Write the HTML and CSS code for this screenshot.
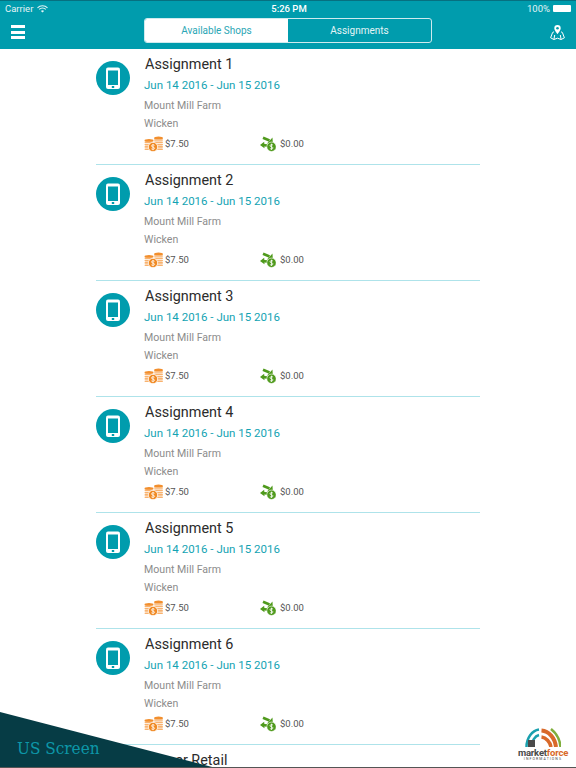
FILE: index.html
```html
<!DOCTYPE html>
<html lang="en">
<head>
<meta charset="utf-8">
<title>Assignments</title>
<link rel="stylesheet" href="styles.css">
</head>
<body>
<svg class="defs" width="0" height="0" aria-hidden="true">
  <symbol id="phone" viewBox="0 0 34 34">
    <circle cx="17" cy="17" r="17" fill="#009cad"/>
    <rect x="10" y="6.5" width="14" height="21.5" rx="2" fill="#fff"/>
    <rect x="12" y="9.5" width="10" height="14.5" fill="#009cad"/>
    <rect x="15.8" y="25" width="2.4" height="2" fill="#009cad"/>
  </symbol>
  <symbol id="coins" viewBox="0 0 20 16">
    <g fill="#f8b26f">
      <ellipse cx="5" cy="4.500" rx="4.500" ry="1.500" fill="#f28f2e"/>
      <rect x="0.500" y="5.500" width="9" height="1.600" rx=".8"/>
      <rect x="0.500" y="7.800" width="9" height="1.600" rx=".8"/>
      <rect x="0.500" y="10.100" width="9" height="1.600" rx=".8"/>
      <rect x="0.500" y="12.400" width="9" height="1.600" rx=".8"/>
      <ellipse cx="14.500" cy="2" rx="4.500" ry="1.600" fill="#f28f2e"/>
      <rect x="10" y="3.200" width="9" height="1.600" rx=".8"/>
      <rect x="10" y="5.500" width="9" height="1.600" rx=".8"/>
      <rect x="10" y="7.800" width="9" height="1.600" rx=".8"/>
      <rect x="10" y="10.100" width="9" height="1.600" rx=".8"/>
      <rect x="10" y="12.400" width="9" height="1.600" rx=".8"/>
    </g>
    <circle cx="9" cy="11" r="4.700" fill="#f08a24" stroke="#fff" stroke-width="0.800"/>
    <path d="M10.500 9.300c-.9-.8-3-.6-3 .7 0 1.500 3 .7 3 2.200 0 1.300-2.200 1.400-3.100.6M9 8v6.200" fill="none" stroke="#fff" stroke-width="0.800"/>
  </symbol>
  <symbol id="swap" viewBox="0 0 16 16">
    <path d="M3 1.800 9.500 4.500" fill="none" stroke="#4f9a1c" stroke-width="2.600"/>
    <path d="M12.500 1.500 12.800 7.500 7 7.400z" fill="#4f9a1c"/>
    <path d="M8.500 9.800 3 9" fill="none" stroke="#4f9a1c" stroke-width="2.400"/>
    <path d="M0 9 4.200 5.800 4.500 12.300z" fill="#4f9a1c"/>
    <circle cx="11.500" cy="10.800" r="4.700" fill="#4f9a1c" stroke="#fff" stroke-width=".6"/>
    <path d="M13 9.100c-.9-.8-3-.6-3 .7 0 1.500 3 .7 3 2.100 0 1.300-2.200 1.400-3.100.6M11.500 7.700v6.200" fill="none" stroke="#fff" stroke-width="0.800"/>
  </symbol>
</svg>

<header class="top">
  <div class="status">
    <div class="status-left">
      <span>Carrier</span>
      <svg class="wifi" width="11" height="8" viewBox="0 0 11 8"><path d="M.5 2.800a7 7 0 0 1 10 0M2.200 4.400a4.600 4.600 0 0 1 6.600 0" fill="none" stroke="#e4f4f6" stroke-width="1.100"/><path d="M3.900 5.900a2.300 2.300 0 0 1 3.200 0L5.500 7.600z" fill="#e4f4f6"/></svg>
    </div>
    <span class="status-time">5:26 PM</span>
    <div class="status-right">
      <span>100%</span>
      <span class="battery"></span>
    </div>
  </div>
  <nav class="nav">
    <div class="burger"><span></span><span></span><span></span></div>
    <div class="tabs">
      <span class="tab tab-on">Available Shops</span>
      <span class="tab">Assignments</span>
    </div>
    <svg class="pin" width="15" height="15" viewBox="0 0 15 15">
      <path d="M7.500 0a3.200 3.200 0 0 0-3.200 3.200c0 2.200 3.200 5.800 3.200 5.800s3.200-3.600 3.200-5.800A3.200 3.200 0 0 0 7.500 0z" fill="#fff"/>
      <circle cx="7.500" cy="3.200" r="1.300" fill="#009cad"/>
      <path d="M4 6.800 2.600 7.500.6 12.800l3.300 1.700 3.600-1.300 3.600 1.300 3.300-1.700-2-5.300L11 6.800M3.900 14.500l.8-4.500M11.100 14.500l-.8-4.500" fill="none" stroke="#fff" stroke-width="1"/>
    </svg>
  </nav>
</header>

<main class="list">
  <article class="row">
    <svg class="avatar"><use href="#phone"/></svg>
    <div class="body">
      <h2 class="title">Assignment 1</h2>
      <p class="date">Jun 14 2016 - Jun 15 2016</p>
      <p class="place">Mount Mill Farm</p>
      <p class="place">Wicken</p>
      <div class="money">
        <span class="amount"><svg class="coins"><use href="#coins"/></svg>$7.50</span>
        <span class="amount"><svg class="swap"><use href="#swap"/></svg>$0.00</span>
      </div>
    </div>
  </article>
  <article class="row">
    <svg class="avatar"><use href="#phone"/></svg>
    <div class="body">
      <h2 class="title">Assignment 2</h2>
      <p class="date">Jun 14 2016 - Jun 15 2016</p>
      <p class="place">Mount Mill Farm</p>
      <p class="place">Wicken</p>
      <div class="money">
        <span class="amount"><svg class="coins"><use href="#coins"/></svg>$7.50</span>
        <span class="amount"><svg class="swap"><use href="#swap"/></svg>$0.00</span>
      </div>
    </div>
  </article>
  <article class="row">
    <svg class="avatar"><use href="#phone"/></svg>
    <div class="body">
      <h2 class="title">Assignment 3</h2>
      <p class="date">Jun 14 2016 - Jun 15 2016</p>
      <p class="place">Mount Mill Farm</p>
      <p class="place">Wicken</p>
      <div class="money">
        <span class="amount"><svg class="coins"><use href="#coins"/></svg>$7.50</span>
        <span class="amount"><svg class="swap"><use href="#swap"/></svg>$0.00</span>
      </div>
    </div>
  </article>
  <article class="row">
    <svg class="avatar"><use href="#phone"/></svg>
    <div class="body">
      <h2 class="title">Assignment 4</h2>
      <p class="date">Jun 14 2016 - Jun 15 2016</p>
      <p class="place">Mount Mill Farm</p>
      <p class="place">Wicken</p>
      <div class="money">
        <span class="amount"><svg class="coins"><use href="#coins"/></svg>$7.50</span>
        <span class="amount"><svg class="swap"><use href="#swap"/></svg>$0.00</span>
      </div>
    </div>
  </article>
  <article class="row">
    <svg class="avatar"><use href="#phone"/></svg>
    <div class="body">
      <h2 class="title">Assignment 5</h2>
      <p class="date">Jun 14 2016 - Jun 15 2016</p>
      <p class="place">Mount Mill Farm</p>
      <p class="place">Wicken</p>
      <div class="money">
        <span class="amount"><svg class="coins"><use href="#coins"/></svg>$7.50</span>
        <span class="amount"><svg class="swap"><use href="#swap"/></svg>$0.00</span>
      </div>
    </div>
  </article>
  <article class="row">
    <svg class="avatar"><use href="#phone"/></svg>
    <div class="body">
      <h2 class="title">Assignment 6</h2>
      <p class="date">Jun 14 2016 - Jun 15 2016</p>
      <p class="place">Mount Mill Farm</p>
      <p class="place">Wicken</p>
      <div class="money">
        <span class="amount"><svg class="coins"><use href="#coins"/></svg>$7.50</span>
        <span class="amount"><svg class="swap"><use href="#swap"/></svg>$0.00</span>
      </div>
    </div>
  </article>
  <article class="row">
    <svg class="avatar"><use href="#phone"/></svg>
    <div class="body">
      <h2 class="title">Grocer Retail</h2>
    </div>
  </article>
</main>

<div class="ribbon"><span class="ribbon-text">US Screen</span></div>

<div class="edge"></div>

<div class="brand">
  <svg width="36" height="19" viewBox="0 0 36 19">
    <g fill="none">
      <path d="M1.500 19C1.500 10 7 2.500 14 1.500" stroke="#1aa0ae" stroke-width="2.500"/>
      <path d="M6.500 19C6.500 13 10 8 14 7" stroke="#1aa0ae" stroke-width="2.500"/>
      <path d="M16.500 2.500C24 3 30 10 31 19" stroke="#d9692a" stroke-width="4"/>
      <path d="M16.500 9C21 9.500 25 14 26 19" stroke="#d9692a" stroke-width="3.500"/>
      <path d="M26 1C31 5 35 12 35.500 19" stroke="#7fae3c" stroke-width="2.500"/>
    </g>
    <rect x="3" y="12" width="7" height="7" fill="#4a4a4a"/>
  </svg>
  <span class="brand-name">market<b>force</b></span>
  <span class="brand-sub">INFORMATIONS</span>
</div>
</body>
</html>
```

FILE: styles.css
```css
* { box-sizing: border-box; }
html, body { margin: 0; height: 768px; overflow: hidden; background: #fff; }
body { font-family: Roboto, "Liberation Sans", sans-serif; position: relative; }
.defs { position: absolute; }

.top { height: 49px; background: #009cad; border-top: 1px solid #067080; color: #e4f4f6; }
.status { height: 15px; display: flex; justify-content: space-between; align-items: center; padding: 0 4px 0 5px; font-size: 9.5px; position: relative; }
.status-left { display: flex; align-items: center; gap: 4px; }
.status-right { display: flex; align-items: center; gap: 3px; }
.status-time { position: absolute; left: 2px; right: 0; text-align: center; font-weight: 500; color: #fff; }
.battery { width: 18px; height: 7px; display: block; border-radius: 1px; background: #fff; margin-right: 1px; }

.nav { height: 33px; display: flex; align-items: flex-start; justify-content: space-between; padding: 2px 11px 0 11px; }
.burger { width: 15px; padding-top: 7px; display: flex; flex-direction: column; gap: 2.5px; }
.burger span { display: block; width: 13.5px; height: 3px; background: #fff; }
.tabs { display: flex; width: 288px; height: 25px; border: 1px solid #cfeaee; border-radius: 3px; overflow: hidden; font-size: 10px; }
.tab { flex: 1; display: flex; align-items: center; justify-content: center; color: #e4f4f6; }
.tab-on { background: #fff; color: #2ba6b5; }
.pin { margin-top: 7px; }

.list { margin-left: 96px; width: 384px; height: 719px; overflow: hidden; }
.row { height: 116.05px; display: flex; gap: 14px; border-bottom: 1px solid #aee3ea; padding-top: 6px; }
.avatar { width: 34px; height: 34px; margin-top: 6px; flex: none; }
.body { flex: 1; }
.title { margin: 0 0 0 1px; font-size: 14.4px; line-height: 20px; font-weight: 400; color: #2b2b2b; }
.date { margin: 2px 0 4px; font-size: 11.5px; line-height: 16px; color: #13a3b3; }
.place { margin: 0; font-size: 10.6px; line-height: 17.5px; color: #8c8c8c; }
.money { display: flex; margin-top: 4px; }
.amount { width: 116px; display: flex; align-items: center; gap: 3px; font-size: 9.5px; line-height: 16px; color: #555; }
.coins { width: 20px; height: 16px; flex: none; margin-right: -2px; }
.swap { width: 16px; height: 16px; flex: none; margin-right: 1px; }

.ribbon { position: absolute; left: 0; bottom: 0; width: 216px; height: 56px; background: #063c45; clip-path: polygon(0 0, 100% 100%, 0 100%); }
.ribbon-text { position: absolute; left: 17px; top: 26px; font-family: "DejaVu Serif Condensed", "DejaVu Serif", serif; font-size: 17px; line-height: 20px; color: #0d97a8; white-space: nowrap; }

.edge { position: absolute; left: 0; right: 0; bottom: 0; height: 1px; background: #555; }

.brand { position: absolute; right: 9px; bottom: 6px; width: 48px; display: flex; flex-direction: column; align-items: center; }
.brand-name { font-size: 9.5px; line-height: 9px; font-weight: 700; color: #4a4a4a; white-space: nowrap; letter-spacing: -.2px; margin-top: 1px; }
.brand-name b { color: #d9692a; font-weight: 700; }
.brand-sub { font-size: 3.5px; line-height: 5px; letter-spacing: 1.1px; color: #444; white-space: nowrap; }
```
